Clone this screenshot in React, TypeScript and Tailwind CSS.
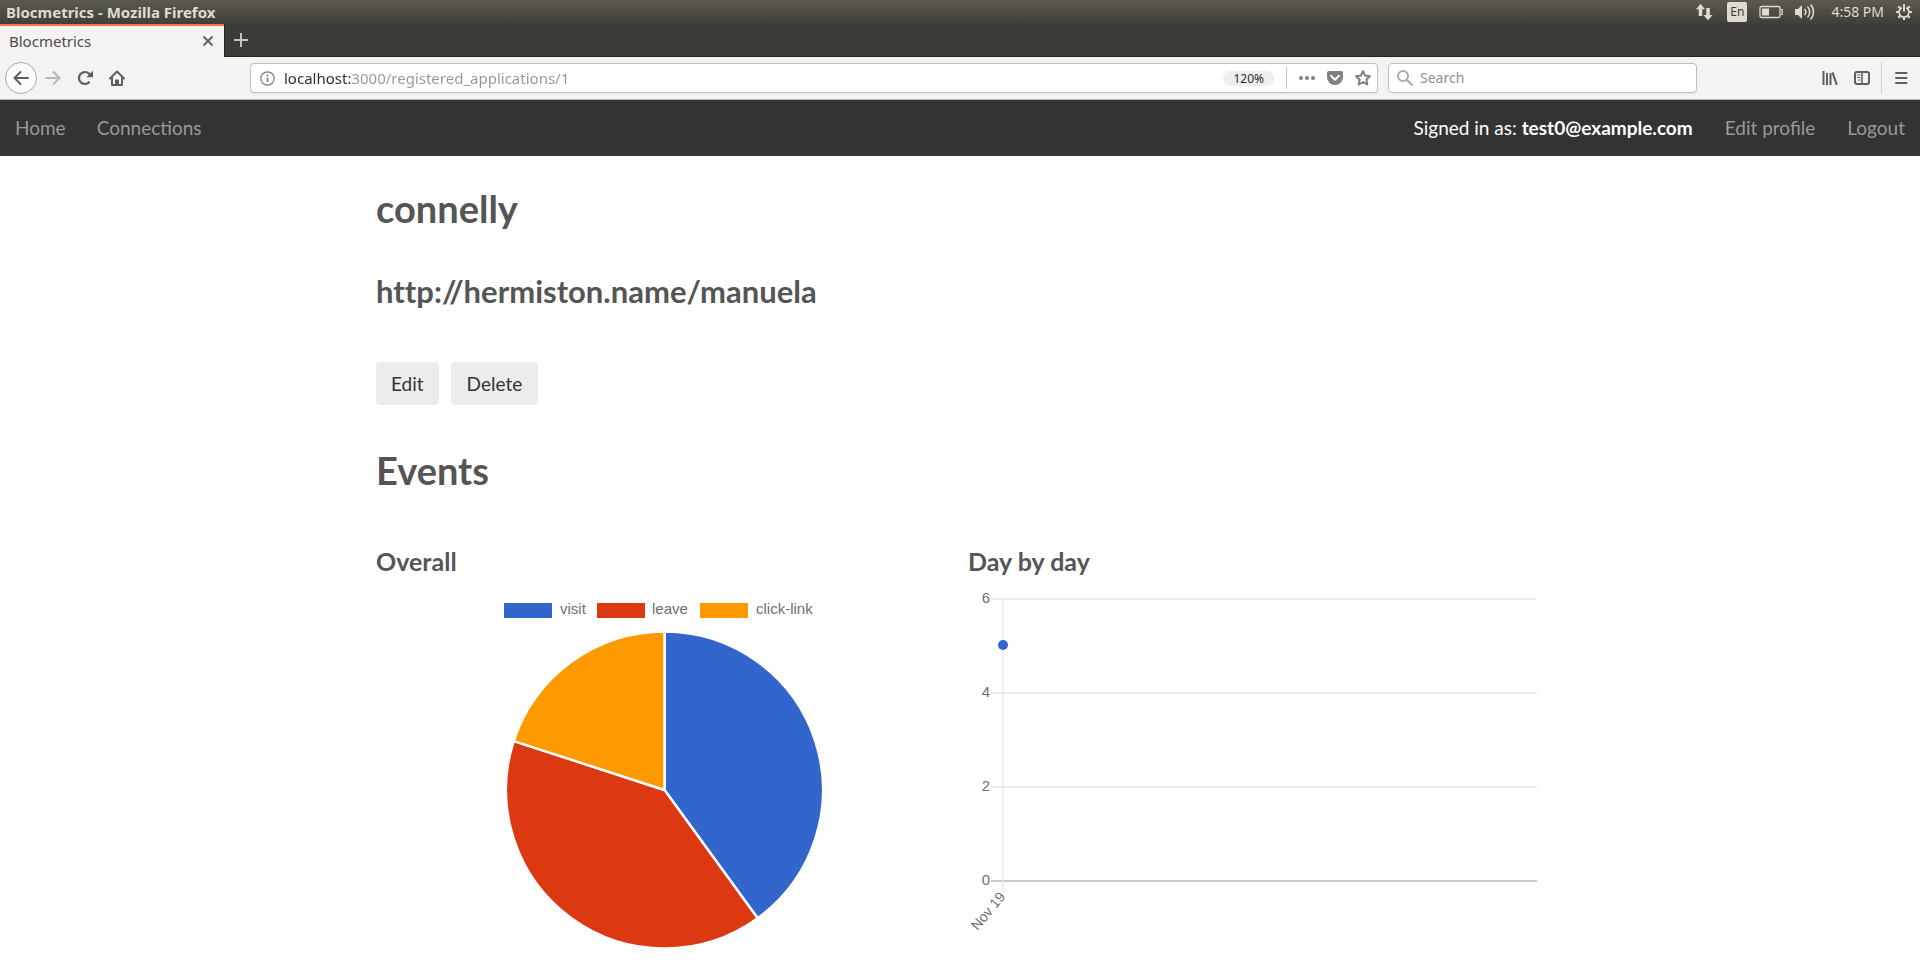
import React from "react";

const CHROME_FONT = "font-['Noto_Sans','Open_Sans',sans-serif]";

function SystemBar() {
  return (
    <header className="flex h-6 items-center justify-between bg-linear-to-b from-[#5c5a50] to-[#3f3e39] pr-2 pl-1.5 text-[#dfdbd2]">
      <span className="text-[15px] leading-5 font-bold">Blocmetrics - Mozilla Firefox</span>
      <div className="flex items-center">
        <svg className="mr-3.5 h-[18px] w-[18px]" viewBox="0 0 18 18" fill="currentColor" aria-label="Network">
          <path d="M5.500 .8 10 6.200H7.300V13H3.700V6.200H1z M13 17.200 8.300 12h2.900V5h3.600v7h2.900z" />
        </svg>
        <span className="mr-3 flex h-5 w-5 items-center justify-center rounded-xs bg-[#dfdbd2] text-xs leading-5 text-[#3c3b37]">En</span>
        <svg className="mr-3 h-4 w-6" viewBox="0 0 24 16" fill="none" stroke="currentColor" aria-label="Battery">
          <rect x="1" y="2.500" width="20" height="11" rx="1.500" strokeWidth="1.300" />
          <path d="M22 5.500h1.200v5H22" strokeWidth="1.200" />
          <rect x="3" y="4.500" width="7" height="7" fill="currentColor" stroke="none" />
        </svg>
        <svg className="mr-4 h-[18px] w-5" viewBox="0 0 20 18" fill="none" stroke="currentColor" strokeWidth="1.500" aria-label="Volume">
          <path d="M0 6h3l4-4v14l-4-4H0z" fill="currentColor" stroke="none" />
          <path d="M9.500 6a4.500 4.500 0 0 1 0 6M12.500 3.500a8 8 0 0 1 0 11M15.500 1.500a11 11 0 0 1 0 15" />
        </svg>
        <time className="mr-3 text-sm leading-5">4:58 PM</time>
        <svg className="h-4 w-4" viewBox="0 0 16 16" fill="none" stroke="currentColor" aria-label="System menu">
          <path d="M5.800 3.600a5 5 0 1 0 4.400 0" strokeWidth="1.800" />
          <path d="M8 0v7.500" strokeWidth="2" />
          <path d="M2.300 2.300l1.900 1.900M13.700 2.300l-1.900 1.900M0 8h2.500M13.500 8H16M2.300 13.700l1.900-1.900M13.700 13.700l-1.900-1.900M8 13.500V16" strokeWidth="2.200" />
        </svg>
      </div>
    </header>
  );
}

function TabStrip() {
  return (
    <div className="flex h-[33px] bg-[#3c3b37]">
      <div className="flex w-56 items-center justify-between border-t-2 border-[#f07746] bg-[#f4f3f2] pr-2.5 pb-0.5 pl-[9px] text-[#4c4c4c]">
        <span className="text-[15px] leading-5">Blocmetrics</span>
        <button aria-label="Close tab">
          <svg className="h-3 w-3" viewBox="0 0 12 12" stroke="#5e5e5e" strokeWidth="1.800">
            <path d="M1.500 1.500l9 9M10.500 1.500l-9 9" />
          </svg>
        </button>
      </div>
      <div className="flex grow items-center border-b border-l border-[#262522] pl-[9px]">
        <button aria-label="New tab">
          <svg className="h-3.5 w-3.5" viewBox="0 0 14 14" stroke="#c9c5bd" strokeWidth="2">
            <path d="M7 0v14M0 7h14" />
          </svg>
        </button>
      </div>
    </div>
  );
}

function Toolbar() {
  return (
    <div className="flex h-[43px] items-center border-b border-[#b5b3b0] bg-[#f4f3f2] pr-3 pl-[5px] text-[#5e5e5e]">
      <button aria-label="Back" className="flex h-8 w-8 items-center justify-center rounded-full border border-[#adaba8] bg-[#fcfcfc]">
        <svg className="h-4 w-4" viewBox="0 0 16 16" fill="none" stroke="currentColor" strokeWidth="2" strokeLinecap="round" strokeLinejoin="round">
          <path d="M15 8H1.500M7.500 2l-6 6 6 6" />
        </svg>
      </button>
      <button aria-label="Forward" className="ml-2">
        <svg className="h-4 w-4" viewBox="0 0 16 16" fill="none" stroke="#b9b8b6" strokeWidth="2" strokeLinecap="round" strokeLinejoin="round">
          <path d="M1 8h13.500M8.500 2l6 6-6 6" />
        </svg>
      </button>
      <button aria-label="Reload" className="ml-4">
        <svg className="h-4 w-4" viewBox="0 0 16 16" fill="none" stroke="currentColor" strokeWidth="2.200">
          <path d="M12.600 11.800A6 6 0 1 1 12 3.600L13.500 5" />
          <path d="M16 .8v6.400H9.400z" fill="currentColor" stroke="none" />
        </svg>
      </button>
      <button aria-label="Home page" className="ml-4">
        <svg className="h-4 w-4" viewBox="0 0 16 16" fill="none" stroke="currentColor" strokeWidth="2" strokeLinejoin="round" strokeLinecap="round">
          <path d="M1 8.500 8 1.500l7 7M3 8v7h10V8" />
          <path d="M6.500 15v-5h3v5z" fill="currentColor" strokeWidth="1" />
        </svg>
      </button>
      <form className="ml-[125px] flex h-[30px] grow items-center rounded-sm border border-[#c3c1be] bg-white pr-1.5 pl-[9px] shadow-xs">
        <svg className="h-[15px] w-[15px] shrink-0" viewBox="0 0 15 15" fill="none" stroke="#7b7b7b" aria-hidden="true">
          <circle cx="7.500" cy="7.500" r="6.700" strokeWidth="1.200" />
          <path d="M7.500 6.500V11M7.500 3.500v1.700" strokeWidth="1.700" />
        </svg>
        <input
          aria-label="Address"
          defaultValue="localhost:3000/registered_applications/1"
          className="ml-[9px] min-w-0 grow bg-linear-to-r from-[#2b2b2b] from-[66px] to-[#969696] to-[66px] bg-clip-text text-[15px] leading-5 text-transparent outline-none"
        />
        <button type="button" className="h-[15px] rounded-full bg-[#efefef] px-2.5 text-xs leading-[15px] text-[#2e2e2e]">120%</button>
        <span className="mx-3 h-[22px] w-px bg-[#c8c8c8]" />
        <button type="button" aria-label="Page actions">
          <svg className="h-4 w-4" viewBox="0 0 16 16" fill="#808080">
            <circle cx="2" cy="8" r="2" /><circle cx="8" cy="8" r="2" /><circle cx="14" cy="8" r="2" />
          </svg>
        </button>
        <button type="button" aria-label="Save to Pocket" className="ml-3">
          <svg className="h-4 w-4" viewBox="0 0 16 16">
            <path d="M1.800 1h12.400Q16 1 16 2.800V7A8 8 0 0 1 0 7V2.800Q0 1 1.800 1z" fill="#808080" />
            <path d="M4 5.800l4 4 4-4" fill="none" stroke="#fff" strokeWidth="2" strokeLinecap="round" strokeLinejoin="round" />
          </svg>
        </button>
        <button type="button" aria-label="Bookmark this page" className="ml-3">
          <svg className="h-4 w-4" viewBox="0 0 16 16" fill="none" stroke="#808080" strokeWidth="2" strokeLinejoin="round">
            <path d="M8 1.200l2.100 4.400 4.900.6-3.600 3.300.9 5L8 12.100l-4.300 2.400.9-5L1 6.200l4.900-.6z" />
          </svg>
        </button>
      </form>
      <form className="ml-2.5 flex h-[30px] w-[309px] items-center rounded-sm border border-[#c3c1be] bg-white pl-2 shadow-xs">
        <svg className="h-4 w-4 shrink-0" viewBox="0 0 16 16" fill="none" stroke="#a9a9a9" strokeWidth="2" strokeLinecap="round" aria-hidden="true">
          <circle cx="6" cy="6" r="5" />
          <path d="M9.800 9.800l5.200 5.200" />
        </svg>
        <input aria-label="Search" placeholder="Search" className="ml-[7px] min-w-0 grow text-sm leading-5 outline-none placeholder:text-[#8f8f8f]" />
      </form>
      <button aria-label="Library" className="ml-[125px]">
        <svg className="h-4 w-4" viewBox="0 0 16 16" fill="none" stroke="currentColor" strokeWidth="2">
          <path d="M1.500 1v14M5 3v12M8.500 3v12" />
          <path d="M10.500 2.300l4.300 12.500" />
        </svg>
      </button>
      <button aria-label="Sidebars" className="ml-4">
        <svg className="h-4 w-4" viewBox="0 0 16 16" fill="none" stroke="currentColor">
          <rect x="1" y="2" width="14" height="12" rx="2" strokeWidth="2" />
          <path d="M8 2v12" strokeWidth="1.500" />
          <path d="M3 5h3.500M3 7.500h3.500M4 10h2.500" strokeWidth="1" />
        </svg>
      </button>
      <span className="mr-3 ml-[11px] h-8 w-px bg-[#d2d0ce]" />
      <button aria-label="Open menu">
        <svg className="h-3 w-3.5" viewBox="0 0 14 12" stroke="currentColor" strokeWidth="2" strokeLinecap="round">
          <path d="M2 1h10.500M2 6h10.500M2 11h10.500" />
        </svg>
      </button>
    </div>
  );
}

function SiteNav() {
  return (
    <nav className="flex h-14 items-center justify-between bg-[#333] px-[15px] text-[19px] leading-7 text-[#999]">
      <div className="flex gap-[31px]">
        <a href="#home">Home</a>
        <a href="#connections">Connections</a>
      </div>
      <div className="flex gap-8">
        <span className="text-white">Signed in as: <b className="font-bold">test0@example.com</b></span>
        <a href="#profile">Edit profile</a>
        <a href="#logout">Logout</a>
      </div>
    </nav>
  );
}

const events = [
  { name: "visit", count: 2, color: "#3366cc", x: 128, label: 184 },
  { name: "leave", count: 2, color: "#dc3912", x: 221, label: 276 },
  { name: "click-link", count: 1, color: "#ff9900", x: 324, label: 380 },
];

function PieChart() {
  const cx = 288.5;
  const cy = 200;
  const r = 158.5;
  const total = events.reduce((sum, e) => sum + e.count, 0);
  let start = 0;
  return (
    <svg className="w-full" viewBox="0 0 576 360" role="img" aria-label="Events overall">
      {events.map((e) => (
        <g key={e.name}>
          <rect x={e.x} y="13" width="48" height="15" fill={e.color} />
          <text x={e.label} y="24" className="fill-[#707070] font-['Liberation_Sans',sans-serif] text-[15px]">{e.name}</text>
        </g>
      ))}
      {events.map((e) => {
        const a = (start / total) * 2 * Math.PI;
        start += e.count;
        const b = (start / total) * 2 * Math.PI;
        return (
          <path
            key={e.name}
            d={`M${cx} ${cy}L${cx + r * Math.sin(a)} ${cy - r * Math.cos(a)}A${r} ${r} 0 0 1 ${cx + r * Math.sin(b)} ${cy - r * Math.cos(b)}Z`}
            fill={e.color}
            stroke="#fff"
            strokeWidth="2.400"
          />
        );
      })}
    </svg>
  );
}

const ticks = [
  { value: 6, y: 9 },
  { value: 4, y: 103 },
  { value: 2, y: 197 },
  { value: 0, y: 291 },
];

function LineChart() {
  return (
    <svg className="w-full overflow-visible" viewBox="0 0 576 360" role="img" aria-label="Events day by day">
      {ticks.map((t) => (
        <g key={t.value}>
          <path d={`M23 ${t.y}H569`} stroke={t.value === 0 ? "#b8b8b8" : "#e6e6e6"} strokeWidth="1.300" />
          <text x="22" y={t.y + 4} textAnchor="end" className="fill-[#707070] font-['Liberation_Sans',sans-serif] text-[15px]">{t.value}</text>
        </g>
      ))}
      <path d="M35 9V303" stroke="#e6e6e6" strokeWidth="1.300" />
      <circle cx="35" cy="55" r="5" fill="#3366cc" />
      <text transform="translate(38 307) rotate(-50)" textAnchor="end" className="fill-[#707070] font-['Liberation_Sans',sans-serif] text-[14px]">Nov 19</text>
    </svg>
  );
}

export default function App() {
  return (
    <div className="min-h-screen bg-white">
      <div className={CHROME_FONT}>
        <SystemBar />
        <TabStrip />
        <Toolbar />
      </div>
      <div className="font-['Lato',sans-serif]">
        <SiteNav />
        <main className="mx-auto max-w-[1168px] pt-7 text-[#555]">
          <h1 className="text-[38px] leading-12 font-bold">connelly</h1>
          <h2 className="mt-[35px] text-[31px] leading-12 font-bold [font-variant-ligatures:none]">http://hermiston.name/manuela</h2>
          <div className="mt-[47px] flex gap-3 text-[19px] leading-7 text-[#333]">
            <button className="h-[43px] rounded-sm bg-[#ececec] px-[15px]">Edit</button>
            <button className="h-[43px] rounded-sm bg-[#ececec] px-4">Delete</button>
          </div>
          <h2 className="mt-[41px] text-[38px] leading-12 font-bold">Events</h2>
          <div className="mt-[49px] grid grid-cols-2 gap-4">
            <section>
              <h3 className="text-[25px] leading-9 font-bold">Overall</h3>
              <div className="mt-[11px]"><PieChart /></div>
            </section>
            <section>
              <h3 className="text-[25px] leading-9 font-bold">Day by day</h3>
              <div className="mt-[11px]"><LineChart /></div>
            </section>
          </div>
        </main>
      </div>
    </div>
  );
}
